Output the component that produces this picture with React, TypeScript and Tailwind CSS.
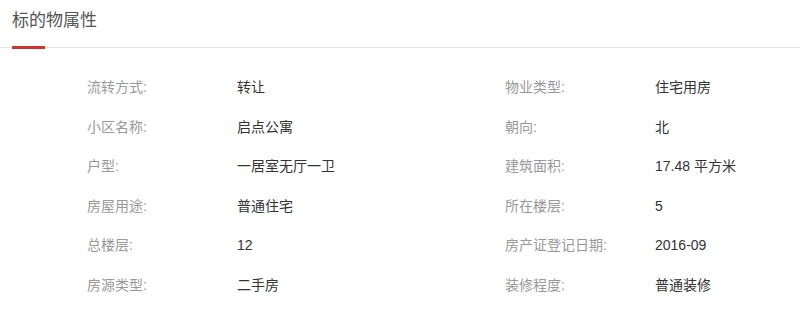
const rows: [string, string, string, string][] = [
  ["流转方式:", "转让", "物业类型:", "住宅用房"],
  ["小区名称:", "启点公寓", "朝向:", "北"],
  ["户型:", "一居室无厅一卫", "建筑面积:", "17.48 平方米"],
  ["房屋用途:", "普通住宅", "所在楼层:", "5"],
  ["总楼层:", "12", "房产证登记日期:", "2016-09"],
  ["房源类型:", "二手房", "装修程度:", "普通装修"],
];

function Field({ label, value }: { label: string; value: string }) {
  return (
    <div className="flex h-[39.5px] items-center text-[14px]">
      <span className="w-[150px] shrink-0 text-[#999999]">{label}</span>
      <span className="text-[#333333]">{value}</span>
    </div>
  );
}

export default function App() {
  return (
    <div
      className="h-[331px] w-[800px] overflow-hidden bg-white"
      style={{ fontFamily: '"Liberation Sans", "Noto Sans CJK SC", sans-serif' }}
    >
      <div className="relative h-[48px] border-b border-[#e6e6e6]">
        <h2 className="pl-[12px] pt-[9px] text-[17px] font-normal leading-[24px] text-[#555555]">
          标的物属性
        </h2>
        <div className="absolute bottom-[-2px] left-[12px] h-[3px] w-[33px] bg-[#d2342b]" />
      </div>
      <div className="pl-[87px] pt-[20px]">
        {rows.map(([l1, v1, l2, v2]) => (
          <div key={l1} className="grid grid-cols-[418px_1fr]">
            <Field label={l1} value={v1} />
            <Field label={l2} value={v2} />
          </div>
        ))}
      </div>
    </div>
  );
}
